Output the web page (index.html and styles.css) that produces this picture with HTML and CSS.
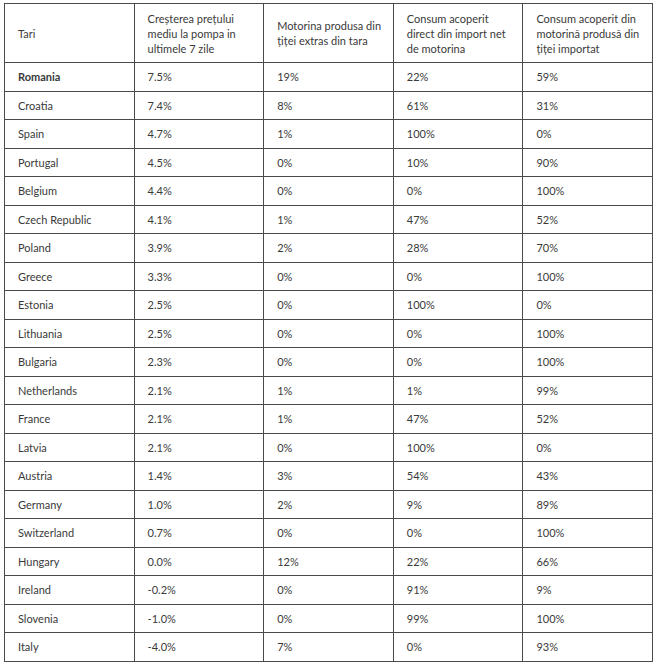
FILE: index.html
```html
<!DOCTYPE html>
<html lang="ro">
<head>
<meta charset="utf-8">
<title>Tabel motorina</title>
<link rel="stylesheet" href="styles.css">
</head>
<body>
<table class="data">
  <colgroup><col><col><col><col><col></colgroup>
  <thead>
    <tr class="head">
      <th>Tari</th>
      <th>Creșterea prețului mediu la pompa in ultimele 7 zile</th>
      <th>Motorina produsa din țiței extras din tara</th>
      <th>Consum acoperit direct din import net de motorina</th>
      <th>Consum acoperit din motorină produsă din țiței importat</th>
    </tr>
  </thead>
  <tbody>
    <tr class="hl"><td>Romania</td><td>7.5%</td><td>19%</td><td>22%</td><td>59%</td></tr>
    <tr><td>Croatia</td><td>7.4%</td><td>8%</td><td>61%</td><td>31%</td></tr>
    <tr><td>Spain</td><td>4.7%</td><td>1%</td><td>100%</td><td>0%</td></tr>
    <tr><td>Portugal</td><td>4.5%</td><td>0%</td><td>10%</td><td>90%</td></tr>
    <tr><td>Belgium</td><td>4.4%</td><td>0%</td><td>0%</td><td>100%</td></tr>
    <tr><td>Czech Republic</td><td>4.1%</td><td>1%</td><td>47%</td><td>52%</td></tr>
    <tr><td>Poland</td><td>3.9%</td><td>2%</td><td>28%</td><td>70%</td></tr>
    <tr><td>Greece</td><td>3.3%</td><td>0%</td><td>0%</td><td>100%</td></tr>
    <tr><td>Estonia</td><td>2.5%</td><td>0%</td><td>100%</td><td>0%</td></tr>
    <tr><td>Lithuania</td><td>2.5%</td><td>0%</td><td>0%</td><td>100%</td></tr>
    <tr><td>Bulgaria</td><td>2.3%</td><td>0%</td><td>0%</td><td>100%</td></tr>
    <tr><td>Netherlands</td><td>2.1%</td><td>1%</td><td>1%</td><td>99%</td></tr>
    <tr><td>France</td><td>2.1%</td><td>1%</td><td>47%</td><td>52%</td></tr>
    <tr><td>Latvia</td><td>2.1%</td><td>0%</td><td>100%</td><td>0%</td></tr>
    <tr><td>Austria</td><td>1.4%</td><td>3%</td><td>54%</td><td>43%</td></tr>
    <tr><td>Germany</td><td>1.0%</td><td>2%</td><td>9%</td><td>89%</td></tr>
    <tr><td>Switzerland</td><td>0.7%</td><td>0%</td><td>0%</td><td>100%</td></tr>
    <tr><td>Hungary</td><td>0.0%</td><td>12%</td><td>22%</td><td>66%</td></tr>
    <tr><td>Ireland</td><td>-0.2%</td><td>0%</td><td>91%</td><td>9%</td></tr>
    <tr><td>Slovenia</td><td>-1.0%</td><td>0%</td><td>99%</td><td>100%</td></tr>
    <tr><td>Italy</td><td>-4.0%</td><td>7%</td><td>0%</td><td>93%</td></tr>
  </tbody>
</table>
</body>
</html>
```
FILE: styles.css
```css
html, body {
  margin: 0;
  padding: 0;
  background: #ffffff;
}
body {
  padding: 3px 0 0 4px;
  font-family: Lato, "Liberation Sans", sans-serif;
  font-size: 11px;
  color: #3a3a3a;
}
.data {
  border-collapse: collapse;
  table-layout: fixed;
  width: 649px;
}
.data th,
.data td {
  border: 1px solid #4a4a4a;
  padding: 0 4px 0 13px;
  text-align: left;
  vertical-align: middle;
  font-weight: normal;
  line-height: 15px;
}
.head {
  height: 59px;
}
.data tbody tr {
  height: 28.5px;
}
.hl td:first-child {
  font-weight: bold;
}
```
